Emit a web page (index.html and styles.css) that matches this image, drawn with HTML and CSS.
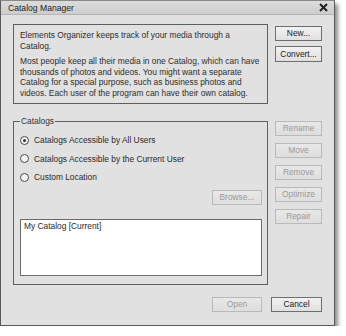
FILE: index.html
```html
<!DOCTYPE html>
<html>
<head>
<meta charset="utf-8">
<link rel="stylesheet" href="styles.css">
</head>
<body>
<div class="window">
  <div class="titlebar">
    <span class="title">Catalog Manager</span>
    <svg class="close" width="9" height="9" viewBox="0 0 9 9"><path d="M1 1L8 8M8 1L1 8" stroke="#222" stroke-width="2"/></svg>
  </div>
  <div class="content">
    <div class="row">
      <div class="info">
        <p>Elements Organizer keeps track of your media through a Catalog.</p>
        <p>Most people keep all their media in one Catalog, which can have thousands of photos and videos. You might want a separate Catalog for a special purpose, such as business photos and videos. Each user of the program can have their own catalog.</p>
      </div>
      <div class="side side-top">
        <button class="btn">New...</button>
        <button class="btn">Convert...</button>
      </div>
    </div>
    <div class="row row2">
      <div class="group">
        <span class="legend">Catalogs</span>
        <label class="radio"><span class="dot checked"></span>Catalogs Accessible by All Users</label>
        <label class="radio"><span class="dot"></span>Catalogs Accessible by the Current User</label>
        <label class="radio"><span class="dot"></span>Custom Location</label>
        <div class="browse-row"><button class="btn disabled browse">Browse...</button></div>
        <div class="list"><div class="item">My Catalog [Current]</div></div>
      </div>
      <div class="side side-mid">
        <button class="btn disabled">Rename</button>
        <button class="btn disabled">Move</button>
        <button class="btn disabled">Remove</button>
        <button class="btn disabled">Optimize</button>
        <button class="btn disabled">Repair</button>
      </div>
    </div>
    <div class="footer">
      <button class="btn disabled open">Open</button>
      <button class="btn cancel">Cancel</button>
    </div>
  </div>
</div>
</body>
</html>
```
FILE: styles.css
```css
* { box-sizing: border-box; }
html, body { margin: 0; padding: 0; background: #ffffff; }
body {
  font-family: "Liberation Sans", Arial, sans-serif;
  font-size: 8.4px;
  color: #2a2a2a;
}
.window {
  width: 335px;
  height: 326px;
  background: #e1e1e1;
  border: 1px solid #5a5a5a;
  border-top-color: #8a8a8a;
  box-shadow: 3px 4px 4px rgba(0,0,0,0.45);
  display: flex;
  flex-direction: column;
}
.titlebar {
  height: 14px;
  background: linear-gradient(#dcdcdc, #cdcdcd);
  border-bottom: 1px solid #b4b4b4;
  display: flex;
  align-items: center;
  justify-content: space-between;
  padding: 0 6px 0 7px;
}
.title { font-size: 8.6px; color: #1e1e1e; }
.close { display: block; }
.content {
  padding: 9px 0 0 12px;
  display: flex;
  flex-direction: column;
}
.row { display: flex; gap: 7px; }
.row2 { margin-top: 17px; }
.info {
  width: 255px;
  height: 80px;
  border: 1px solid #5e5e5e;
  padding: 5px 5px 5px 6px;
  color: #2e2e2e;
}
.info p { margin: 0 0 5px 0; line-height: 10.6px; }
.side { display: flex; flex-direction: column; width: 47px; }
.side-top { padding-top: 2px; gap: 5px; }
.side-mid { gap: 7px; }
.btn {
  font-family: inherit;
  font-size: 8.4px;
  color: #222;
  height: 15px;
  width: 47px;
  padding: 0;
  border: 1px solid #6e6e6e;
  background: linear-gradient(#f2f2f2, #e0e0e0);
  border-radius: 0;
  line-height: 13px;
}
.side-top .btn:last-child { height: 16px; }
.btn.disabled {
  color: #9a9a9a;
  border-color: #b9b9b9;
  background: linear-gradient(#e8e8e8, #dedede);
}
.group {
  position: relative;
  width: 255px;
  height: 164px;
  border: 1px solid #5e5e5e;
  padding: 9px 5px 0 6px;
  display: flex;
  flex-direction: column;
}
.legend {
  position: absolute;
  top: -6px;
  left: 6px;
  padding: 0 1px;
  background: #e1e1e1;
  line-height: 10px;
  color: #333;
}
.radio {
  display: flex;
  align-items: center;
  height: 18.5px;
  color: #2a2a2a;
}
.dot {
  width: 9px;
  height: 9px;
  border-radius: 50%;
  border: 1px solid #4a4a4a;
  background: #f4f4f4;
  margin-right: 5px;
  position: relative;
}
.dot.checked::after {
  content: "";
  position: absolute;
  left: 2px;
  top: 2px;
  width: 3px;
  height: 3px;
  border-radius: 50%;
  background: #333;
}
.browse-row { display: flex; justify-content: flex-end; margin-top: 3px; }
.browse { width: 50px; }
.list {
  margin-top: 14px;
  height: 57px;
  background: #ffffff;
  border: 1px solid #6a6a6a;
  padding: 1px 3px;
}
.item { line-height: 10px; color: #2a2a2a; }
.footer {
  display: flex;
  gap: 9px;
  margin-top: 12px;
  padding-left: 199px;
}
.open { width: 50px; }
.cancel { width: 51px; }
```
